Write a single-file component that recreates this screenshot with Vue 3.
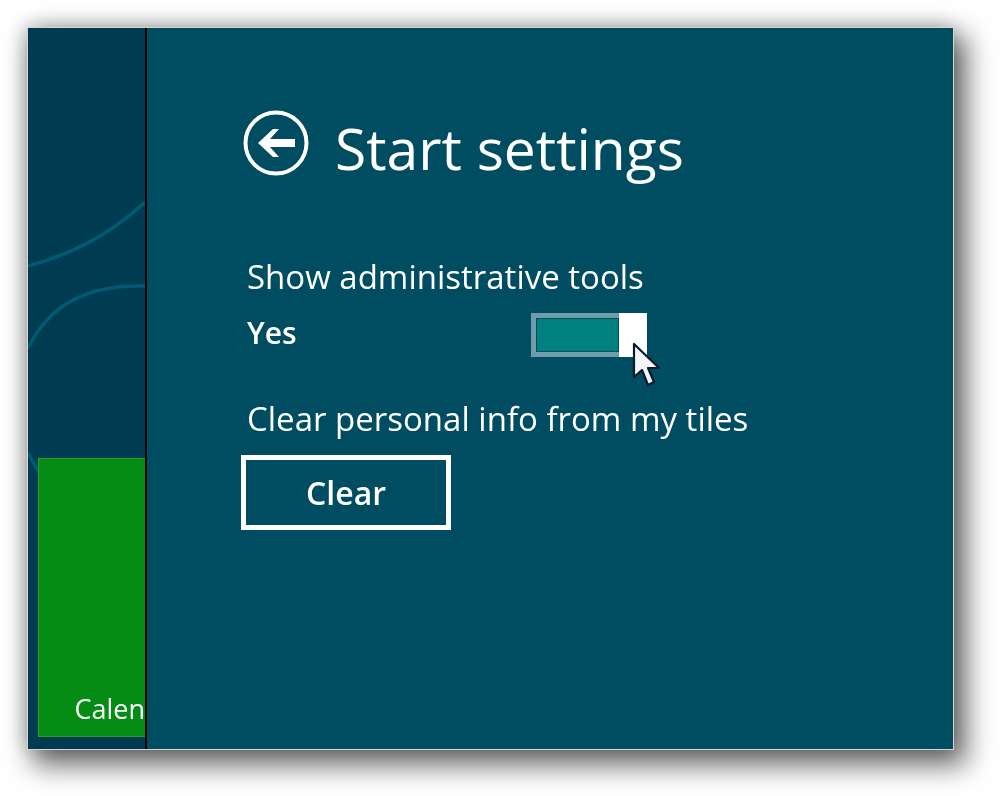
<template>
  <div class="page">
    <div class="screen">
      <div class="start-strip">
        <svg class="curves" width="117" height="721" viewBox="0 0 117 721">
          <path d="M0 238 C45 226 85 204 117 174" />
          <path d="M0 320 C20 280 55 256 117 258" />
          <path d="M0 425 L10 443" />
        </svg>
        <div class="tile">
          <span class="tile-name">Calen</span>
        </div>
      </div>
      <div class="divider"></div>
      <div class="panel">
        <div class="panel-head">
          <svg class="back" width="66" height="66" viewBox="0 0 66 66">
            <circle cx="33" cy="33" r="30.5" fill="none" stroke="#fff" stroke-width="4" />
            <path d="M15 33 L30 19 L36 19 L27 29 L52 29 L52 37 L27 37 L36 47 L30 47 Z" fill="#fff" />
          </svg>
          <h1 class="title">Start settings</h1>
        </div>
        <div class="setting-label">Show administrative tools</div>
        <div class="toggle-row">
          <span class="toggle-value">Yes</span>
          <div class="toggle">
            <div class="toggle-fill"></div>
            <div class="toggle-thumb"></div>
            <svg class="cursor" width="30" height="46" viewBox="0 0 30 46">
              <path d="M2 2 L2 35 L10 28 L16 43 L22 40 L16 26 L27 26 Z" fill="#f4f5f6" stroke="#0c1a30" stroke-width="2.2" stroke-linejoin="round" />
            </svg>
          </div>
        </div>
        <div class="setting-label clear-label">Clear personal info from my tiles</div>
        <button class="clear-btn">Clear</button>
      </div>
    </div>
  </div>
</template>

<script setup>
</script>

<style>
html, body {
  background: #fff;
}
</style>

<style scoped>
.page {
  width: 1000px;
  height: 796px;
  padding: 28px 47px 47px 28px;
  box-sizing: border-box;
  font-family: "Open Sans", "Noto Sans", sans-serif;
  color: #fff;
  overflow: hidden;
}

.screen {
  display: flex;
  height: 721px;
  outline: 1px solid #d8d4d0;
  box-shadow: 9px 12px 26px 4px rgba(0, 0, 0, 0.6), -2px -3px 20px rgba(0, 0, 0, 0.22);
  filter: blur(0.6px);
}

.start-strip {
  position: relative;
  width: 117px;
  background: #003c51;
  display: flex;
  flex-direction: column;
  justify-content: flex-end;
  padding: 0 0 12px 10px;
  box-sizing: border-box;
}

.curves {
  position: absolute;
  left: 0;
  top: 0;
}

.curves path {
  fill: none;
  stroke: #005a74;
  stroke-width: 3.5;
}

.tile {
  position: relative;
  height: 279px;
  background: #048c14;
  border: 1px solid #2a9a35;
  border-right: 0;
  box-sizing: border-box;
  display: flex;
  align-items: flex-end;
  justify-content: flex-end;
  overflow: hidden;
}

.tile-name {
  font-size: 27px;
  line-height: 30px;
  margin-bottom: 12px;
  white-space: nowrap;
}

.divider {
  width: 2px;
  background: #000;
}

.panel {
  flex: 1;
  background: #004c60;
  padding: 82px 0 0 94px;
  box-sizing: border-box;
  display: flex;
  flex-direction: column;
  align-items: flex-start;
}

.panel-head {
  display: flex;
  align-items: center;
  gap: 26px;
  height: 66px;
  margin-left: 2px;
}

.back {
  flex: none;
}

.title {
  margin: 10px 0 0;
  font-size: 57px;
  font-weight: 400;
  line-height: 66px;
  white-space: nowrap;
}

.setting-label {
  margin: 81px 0 0 6px;
  font-size: 33px;
  line-height: 40px;
  white-space: nowrap;
}

.toggle-row {
  display: flex;
  align-items: center;
  margin: 16px 0 0 6px;
  height: 44px;
}

.toggle-value {
  width: 284px;
  margin-bottom: 6px;
  font-size: 30px;
  font-weight: 600;
}

.toggle {
  position: relative;
  display: flex;
  width: 116px;
  height: 44px;
  box-sizing: border-box;
}

.toggle-fill {
  flex: 1;
  background: #00807f;
  border: 5px solid #6f9ca8;
  border-right: 0;
  box-shadow: inset 0 0 0 1px #004c60;
  box-sizing: border-box;
}

.toggle-thumb {
  width: 28px;
  background: #fff;
}

.cursor {
  position: absolute;
  left: 101px;
  top: 29px;
}

.clear-label {
  margin-top: 42px;
}

.clear-btn {
  margin: 16px 0 0 0;
  width: 210px;
  height: 75px;
  background: transparent;
  border: 5px solid #fff;
  color: #fff;
  font: 600 32px "Open Sans", "Noto Sans", sans-serif;
  box-sizing: border-box;
}
</style>
